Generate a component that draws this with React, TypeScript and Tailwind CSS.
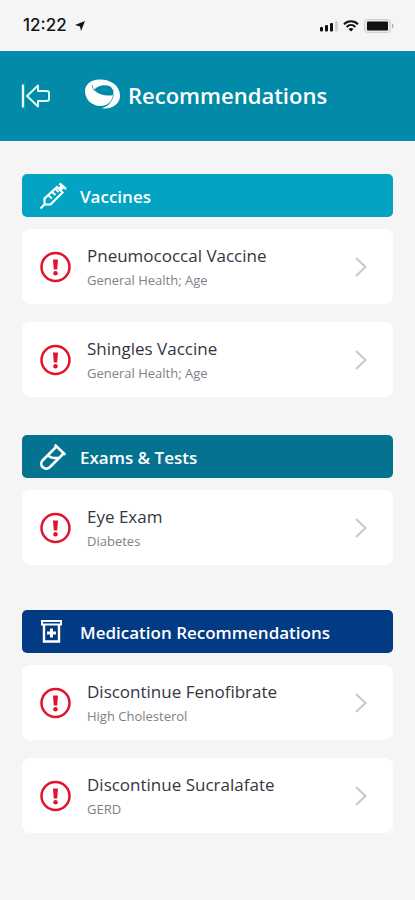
import type { ReactNode } from "react";

type Item = { title: string; detail: string };
type Section = { title: string; bar: string; spacing: string; icon: ReactNode; items: Item[] };

const SyringeIcon = () => (
  <svg aria-hidden="true" className="h-7 w-7" viewBox="0 0 28 28" fill="none" stroke="white" strokeWidth="2.200">
    <path d="M1.500 26.500L6 22M5.500 22.500v-6L18 5l5.500 5.500L11.500 22.500z" />
    <path d="M9.500 13.500l3.500 3M13 10l3.500 3M16.500 7l3 3" strokeWidth="1.800" />
    <path d="M20.500 7.500l3.500-3.500" strokeWidth="4" />
    <path d="M20.500 1.500l6.500 5.500" strokeWidth="2.400" />
  </svg>
);

const TubeIcon = () => (
  <svg aria-hidden="true" className="h-7 w-7" viewBox="0 0 28 28" fill="none" stroke="white" strokeWidth="2.600" strokeLinejoin="round" strokeLinecap="round">
    <path d="M16.500 2.500l9 8.500" />
    <path d="M17 4L3.500 17.500C-.5 22.500 6 28.500 11 24L24 11" />
    <path d="M9.500 13c3 2.500 5.500 2.500 10 2" />
  </svg>
);

const BottleIcon = () => (
  <svg aria-hidden="true" className="h-7 w-7" viewBox="0 0 28 28" fill="none" stroke="white" strokeWidth="2">
    <path d="M3 3h19v3.500H3z" />
    <path d="M5 6v17.500h15V6" strokeWidth="2.400" />
    <path d="M12.500 10.500v9M8 15h9" strokeWidth="3" />
  </svg>
);

const sections: Section[] = [
  {
    title: "Vaccines",
    bar: "bg-[#02a3c3]",
    spacing: "",
    icon: <SyringeIcon />,
    items: [
      { title: "Pneumococcal Vaccine", detail: "General Health; Age" },
      { title: "Shingles Vaccine", detail: "General Health; Age" },
    ],
  },
  {
    title: "Exams & Tests",
    bar: "bg-[#03738f]",
    spacing: "",
    icon: <TubeIcon />,
    items: [{ title: "Eye Exam", detail: "Diabetes" }],
  },
  {
    title: "Medication Recommendations",
    bar: "bg-[#023a83]",
    spacing: "pt-[7px]",
    icon: <BottleIcon />,
    items: [
      { title: "Discontinue Fenofibrate", detail: "High Cholesterol" },
      { title: "Discontinue Sucralafate", detail: "GERD" },
    ],
  },
];

function StatusBar() {
  return (
    <div className="flex h-[51px] items-center justify-between pr-[21px] pl-[23px]">
      <div className="flex items-center gap-2">
        <span className="font-['Inter',sans-serif] text-[17px] font-medium text-[#161616]">12:22</span>
        <svg aria-hidden="true" className="h-2.5 w-2.5" viewBox="0 0 10 10">
          <path d="M10 0L6 10 5 5.500 0 4z" fill="#111" />
        </svg>
      </div>
      <div className="flex items-center gap-[5px]">
        <svg aria-hidden="true" className="h-3 w-[18px]" viewBox="0 0 18 12" fill="#111">
          <rect x="0" y="7" width="3" height="4.500" rx="1" />
          <rect x="5" y="5" width="3" height="6.500" rx="1" />
          <rect x="10" y="3" width="3" height="8.500" rx="1" />
          <rect x="15" y="1" width="3" height="10.500" rx="1" fill="#d2d2d2" />
        </svg>
        <svg aria-hidden="true" className="h-3 w-4" viewBox="0 0 16 12" fill="none" stroke="#111" strokeWidth="2">
          <path d="M1 4.200c4-4 10-4 14 0M3.600 7c2.600-2.600 6.200-2.600 8.800 0" />
          <path d="M5.500 9c1.500-1.300 3.500-1.300 5 0L8 11.500z" fill="#111" stroke="none" />
        </svg>
        <svg aria-hidden="true" className="h-3.5 w-[30px]" viewBox="0 0 30 14">
          <rect x="0.500" y="0.500" width="26" height="13" rx="3" fill="#e9e9e9" stroke="#d0d0d0" />
          <rect x="3" y="2.500" width="21" height="9" rx="1" fill="#111" />
          <path d="M28 4.500c2 1 2 4 0 5z" fill="#aaa" />
        </svg>
      </div>
    </div>
  );
}

function Header() {
  return (
    <header className="flex h-[90px] items-center bg-[#028aa9] pl-[21px] text-white">
      <button type="button" aria-label="Back" className="mr-[34px]">
        <svg aria-hidden="true" className="h-6 w-[30px]" viewBox="0 0 30 24" fill="none" stroke="#e4f8fb" strokeWidth="2">
          <path d="M2 0.500v23" strokeWidth="2.400" />
          <path d="M6 12L17 1.500V7h8.500q2.500 0 2.500 2v6q0 2-2.500 2H17v5.500z" strokeLinejoin="round" />
        </svg>
      </button>
      <svg aria-hidden="true" className="mr-2 mb-1 h-[30px] w-[35px]" viewBox="0 0 35 30">
        <path d="M16 0.500C6 0 0 5.500 0 12c0 8 6 14 14 15 9 0.500 14-4 15.500-11L27 4C24 1.500 20 0.500 16 0.500z" fill="white" />
        <path d="M24 2.500c8 2 12 10 10.800 16.500C33.500 26 26 30.500 17 29.300 25 26.500 29 20.500 29 14 28.500 9 27 5.500 24 2.500z" fill="white" />
        <path d="M9 11C13 6 20 5.200 25.500 7.500c2.500 2.500 3.500 5.500 2.700 8.500C22 17.500 14 16 9 11z" fill="#028aa9" />
        <path d="M28.500 16c-1 5.500-4.500 9.500-11 11.700" fill="none" stroke="#028aa9" strokeWidth="0.700" />
        <path d="M7 6c0.300 2 1 3.500 2.500 5.500" fill="none" stroke="#028aa9" strokeWidth="0.800" />
      </svg>
      <h1 className="pb-0.5 text-[22px] leading-8 font-semibold">Recommendations</h1>
    </header>
  );
}

function Card({ title, detail }: Item) {
  return (
    <li>
      <button type="button" className="flex h-[75px] w-full items-center rounded-lg bg-white pr-[26px] pl-[17px] text-left">
        <svg aria-hidden="true" className="mr-4 h-8 w-8 shrink-0" viewBox="0 0 32 32">
          <circle cx="16.500" cy="16" r="14" fill="none" stroke="#e2132d" strokeWidth="2.500" />
          <path d="M14 8.500h5l-0.800 10h-3.400z" fill="#e2132d" />
          <circle cx="16.500" cy="22.200" r="2.300" fill="#e2132d" />
        </svg>
        <span className="flex min-w-0 grow flex-col pt-0.5">
          <span className="text-[17px] leading-6 text-[#34363f]">{title}</span>
          <span className="text-[13px] leading-6 text-[#7d8289]">{detail}</span>
        </span>
        <svg aria-hidden="true" className="h-5 w-3 shrink-0" viewBox="0 0 12 20" fill="none" stroke="#c5c8c9" strokeWidth="2">
          <path d="M1 1l9.500 9L1 19" />
        </svg>
      </button>
    </li>
  );
}

export default function App() {
  return (
    <div className="min-h-screen bg-[#f5f5f5] font-['Open_Sans',sans-serif]">
      <StatusBar />
      <Header />
      <main className="flex flex-col gap-[38px] px-[22px] pt-[33px] pb-16">
        {sections.map((section) => (
          <section key={section.title} className={section.spacing}>
            <div className={`mb-3 flex h-[43px] items-center gap-[13px] rounded-[5px] pl-[17px] text-white ${section.bar}`}>
              {section.icon}
              <h2 className="pt-0.5 text-[17px] leading-6 font-semibold">{section.title}</h2>
            </div>
            <ul className="flex flex-col gap-[18px]">
              {section.items.map((item) => (
                <Card key={item.title} {...item} />
              ))}
            </ul>
          </section>
        ))}
      </main>
    </div>
  );
}
